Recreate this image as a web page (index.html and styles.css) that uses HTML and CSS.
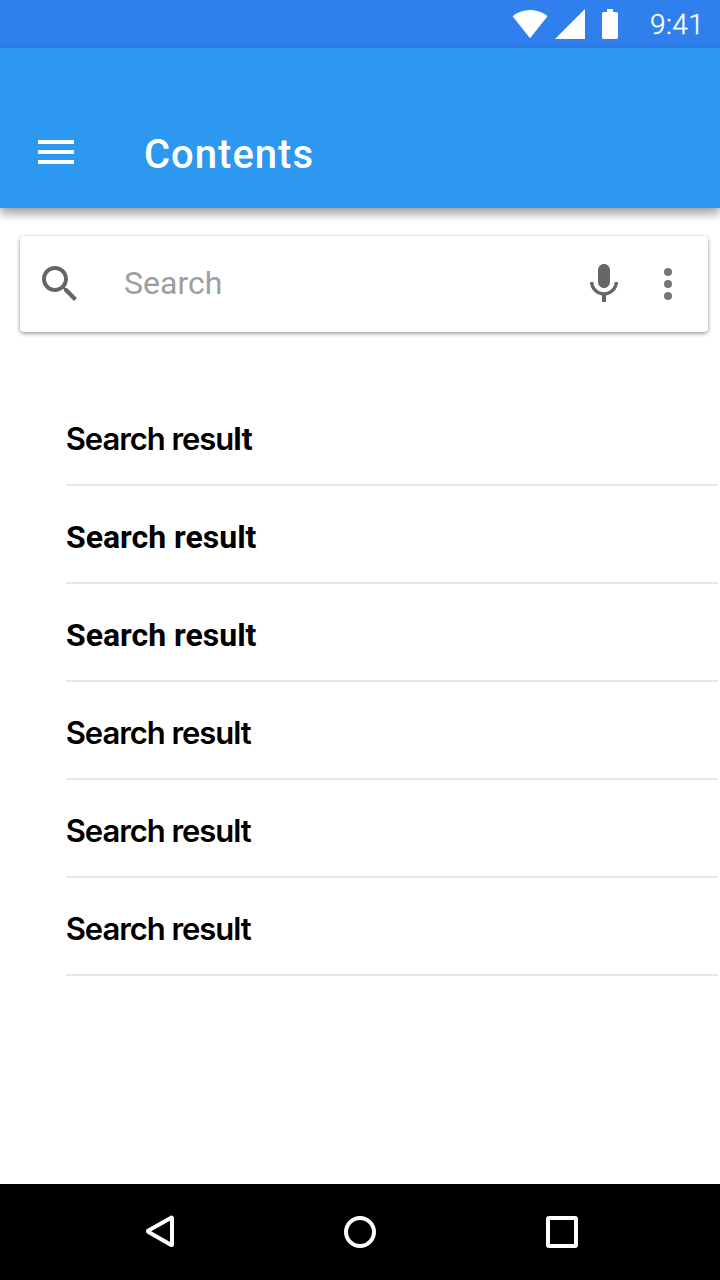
FILE: index.html
```html
<!DOCTYPE html>
<html lang="en">
<head>
<meta charset="utf-8">
<title>Contents</title>
<link rel="stylesheet" href="styles.css">
</head>
<body>
<div class="screen">
  <div class="status-bar">
    <svg class="status-icons" width="108" height="32" viewBox="512 8 108 32" fill="#fff">
      <path d="M530 38.300 512.600 16.200C517.300 12.300 523.200 10 530 10s12.800 2.300 17.500 6.200z"/>
      <path d="M585 9v30h-30z"/>
      <path d="M607 9h6v3h3.200a1.800 1.800 0 0 1 1.800 1.800v23.400a1.800 1.800 0 0 1-1.800 1.800h-12.400a1.800 1.800 0 0 1-1.800-1.800V13.800a1.800 1.800 0 0 1 1.800-1.800H607z"/>
    </svg>
    <time class="clock">9:41</time>
  </div>
  <header class="app-bar">
    <svg class="menu-icon" width="36" height="24" viewBox="0 0 36 24" fill="#fff"><path d="M0 0h36v4H0zM0 10h36v4H0zM0 20h36v4H0z"/></svg>
    <h1 class="title">Contents</h1>
  </header>
  <main class="content">
    <div class="search-card">
      <svg width="48" height="48" viewBox="0 0 24 24" fill="#666"><path d="M15.5 14h-.79l-.28-.27C15.41 12.590 16 11.110 16 9.500 16 5.910 13.090 3 9.500 3S3 5.910 3 9.500 5.910 16 9.500 16c1.610 0 3.090-.59 4.230-1.570l.27.28v.79l5 4.990L20.490 19l-4.990-5zm-6 0C7.010 14 5 11.990 5 9.500S7.010 5 9.500 5 14 7.010 14 9.500 11.990 14 9.500 14z"/></svg>
      <span class="search-label">Search</span>
      <svg width="48" height="48" viewBox="0 0 24 24" fill="#666"><path d="M12 14c1.660 0 2.990-1.340 2.990-3L15 5c0-1.660-1.340-3-3-3S9 3.340 9 5v6c0 1.660 1.340 3 3 3zm5.300-3c0 3-2.540 5.100-5.300 5.100S6.700 14 6.700 11H5c0 3.410 2.720 6.230 6 6.720V21h2v-3.280c3.280-.48 6-3.300 6-6.720h-1.700z"/></svg>
      <svg class="more-icon" width="48" height="48" viewBox="0 0 24 24" fill="#757575"><circle cx="12" cy="6" r="2"/><circle cx="12" cy="12" r="2"/><circle cx="12" cy="18" r="2"/></svg>
    </div>
    <ul class="results">
      <li class="result">Search resu<span class="tail">lt</span></li>
      <li class="result strong">Search result</li>
      <li class="result strong">Search result</li>
      <li class="result">Search result</li>
      <li class="result">Search result</li>
      <li class="result">Search result</li>
    </ul>
  </main>
  <nav class="nav-bar">
    <svg width="720" height="96" viewBox="0 1184 720 96" fill="none" stroke="#fff" stroke-width="4" stroke-linejoin="round">
      <path d="M172 1218.500v26q0 .8-.8 .4l-22.700-12.900q-1-.8 0-1.500l22.700-12.800q.8-.3 .8 .8z"/>
      <circle cx="360" cy="1232" r="14"/>
      <rect x="548" y="1218" width="28" height="28" rx="1"/>
    </svg>
  </nav>
</div>
</body>
</html>
```
FILE: styles.css
```css
* {
  box-sizing: border-box;
}

body {
  margin: 0;
  font-family: Roboto, sans-serif;
}

svg {
  display: block;
  flex: none;
}

.screen {
  display: flex;
  flex-direction: column;
  width: 720px;
  height: 1280px;
  background: #fff;
  overflow: hidden;
}

.status-bar {
  display: flex;
  align-items: center;
  justify-content: flex-end;
  height: 48px;
  padding-right: 17px;
  background: #2f80ed;
}

.clock {
  width: 53px;
  margin-left: 30px;
  padding-top: 2px;
  color: #fff;
  font-size: 28px;
  font-weight: 300;
  line-height: 46px;
  letter-spacing: .4px;
  -webkit-text-stroke: .3px #fff;
  white-space: nowrap;
}

.app-bar {
  display: flex;
  align-items: flex-start;
  height: 160px;
  padding: 92px 38px 0;
  gap: 70px;
  background: #2d98f0;
  box-shadow: 0 5px 10px rgba(0, 0, 0, .22), 0 5px 10px rgba(0, 0, 0, .22);
}

.title {
  margin: -9px 0 0;
  color: #fff;
  font-size: 40px;
  font-weight: 500;
  line-height: 48px;
  letter-spacing: 1px;
}

.content {
  flex: 1;
  padding: 28px 2px 0 20px;
}

.search-card {
  display: flex;
  align-items: center;
  width: 688px;
  height: 96px;
  padding: 0 16px;
  border-radius: 4px;
  background: #fff;
  box-shadow: 0 0 3px rgba(0, 0, 0, .14), 0 2px 4px rgba(0, 0, 0, .32);
}

.search-label {
  flex: 1;
  margin-left: 40px;
  padding-bottom: 2px;
  color: #9e9e9e;
  font-size: 32px;
  line-height: 48px;
}

.more-icon {
  margin-left: 16px;
}

.results {
  margin: 56px 0 0 46px;
  padding: 0;
  list-style: none;
}

.result {
  height: 98px;
  padding-top: 32px;
  border-bottom: 2px solid #e6e6e6;
  color: #000;
  font: 600 31px/38px Inter, sans-serif;
  letter-spacing: -1.05px;
  text-indent: -.3px;
}

.tail {
  font: 700 32px/38px Roboto, sans-serif;
  letter-spacing: 0;
}

.strong {
  font: 700 32px/38px Roboto, sans-serif;
  letter-spacing: 0;
  text-indent: 0;
}

.nav-bar {
  height: 96px;
  background: #000;
}
```
